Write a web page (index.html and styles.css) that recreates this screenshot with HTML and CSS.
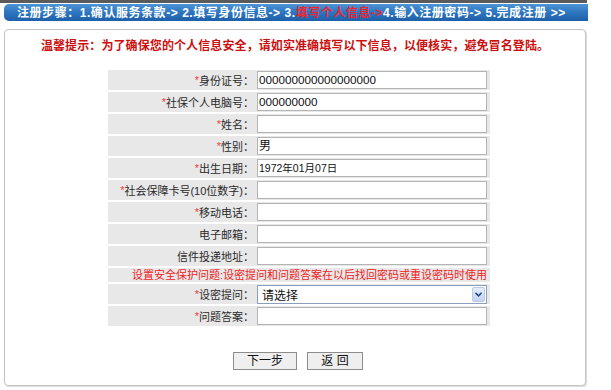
FILE: index.html
```html
<!DOCTYPE html>
<html lang="zh-CN">
<head>
<meta charset="utf-8">
<title>注册步骤</title>
<link rel="stylesheet" href="styles.css">
</head>
<body>
<div class="page">
  <div class="topline"></div>
  <div class="steps">注册步骤：1.确认服务条款-&gt; 2.填写身份信息-&gt; 3.<span class="cur">填写个人信息-&gt;</span>4.输入注册密码-&gt; 5.完成注册 &gt;&gt;</div>
  <div class="box">
    <p class="tip">温馨提示：为了确保您的个人信息安全，请如实准确填写以下信息，以便核实，避免冒名登陆。</p>
    <div class="form">
      <div class="row"><label class="lbl"><i>*</i>身份证号：</label><div class="field"><span class="input">000000000000000000</span></div></div>
      <div class="row"><label class="lbl"><i>*</i>社保个人电脑号：</label><div class="field"><span class="input">000000000</span></div></div>
      <div class="row"><label class="lbl"><i>*</i>姓名：</label><div class="field"><span class="input"></span></div></div>
      <div class="row"><label class="lbl"><i>*</i>性别：</label><div class="field"><span class="input cjk">男</span></div></div>
      <div class="row"><label class="lbl"><i>*</i>出生日期：</label><div class="field"><span class="input small">1972年01月07日</span></div></div>
      <div class="row"><label class="lbl"><i>*</i>社会保障卡号(10位数字)：</label><div class="field"><span class="input"></span></div></div>
      <div class="row"><label class="lbl"><i>*</i>移动电话：</label><div class="field"><span class="input"></span></div></div>
      <div class="row"><label class="lbl">电子邮箱：</label><div class="field"><span class="input"></span></div></div>
      <div class="row"><label class="lbl">信件投递地址：</label><div class="field"><span class="input"></span></div></div>
      <div class="row note">设置安全保护问题:设密提问和问题答案在以后找回密码或重设密码时使用</div>
      <div class="row"><label class="lbl"><i>*</i>设密提问：</label><div class="field"><div class="select"><span class="sel-text">请选择</span><span class="sel-btn"><svg width="7" height="5" viewBox="0 0 7 5"><path d="M0.5 0.8 L3.5 3.8 L6.5 0.8" fill="none" stroke="#2b4b8c" stroke-width="1.6"/></svg></span></div></div></div>
      <div class="row"><label class="lbl"><i>*</i>问题答案：</label><div class="field"><span class="input"></span></div></div>
    </div>
    <div class="buttons">
      <button class="btn next">下一步</button>
      <button class="btn back">返 回</button>
    </div>
  </div>
</div>
</body>
</html>
```
FILE: styles.css
```css
html, body {
  margin: 0;
  padding: 0;
  background: #ffffff;
}
body {
  font-family: "Liberation Sans", "Noto Sans CJK SC", sans-serif;
  font-size: 12px;
  color: #333;
}
.page {
  width: 611px;
  height: 390px;
  overflow: hidden;
}
.topline {
  width: 587px;
  height: 3px;
  background: #5a5a5a;
}
.steps {
  margin: 1px 0 0 4px;
  width: 571px;
  height: 17px;
  padding-left: 13px;
  line-height: 18px;
  border-radius: 5px 0 0 5px;
  background: linear-gradient(#4d94d6 0%, #2f78c2 45%, #1e5fa9 100%);
  color: #ffffff;
  font-weight: bold;
  font-size: 12px;
  letter-spacing: 0.55px;
  white-space: nowrap;
  overflow: hidden;
}
.steps .cur {
  color: #f0262e;
}
.box {
  margin: 8px 0 0 4px;
  width: 580px;
  height: 355px;
  border: 1px solid #c4c4c4;
  border-radius: 4px;
  box-shadow: 1px 1px 1px #dcdcdc;
  background: #fff;
  display: flex;
  flex-direction: column;
  align-items: flex-start;
}
.tip {
  margin: 9px 0 0 0;
  width: 100%;
  text-align: center;
  color: #cc1010;
  font-weight: bold;
  font-size: 12px;
  line-height: 14px;
  letter-spacing: 0.1px;
}
.form {
  margin: 17px 0 0 103px;
  width: 382px;
  display: flex;
  flex-direction: column;
  gap: 2px;
}
.row {
  height: 20px;
  display: flex;
  align-items: center;
  background: #e8e8e8;
}
.lbl {
  width: 147px;
  box-sizing: border-box;
  padding-right: 1px;
  text-align: right;
  font-size: 11px;
  color: #2a2a2a;
  white-space: nowrap;
}
.lbl i {
  font-style: normal;
  color: #f03a3a;
  font-size: 11px;
  position: relative;
  top: -1px;
}
.field {
  margin-left: 2px;
  display: flex;
  align-items: center;
}
.input {
  width: 230px;
  height: 18px;
  box-sizing: border-box;
  border: 1px solid #b4b4b4;
  background: #fff;
  padding-left: 1px;
  font-size: 11.7px;
  line-height: 16px;
  color: #111;
  white-space: nowrap;
}
.input.small {
  font-size: 10.5px;
}
.input.cjk {
  font-size: 12px;
}
.row.note {
  height: 14px;
  justify-content: flex-end;
  padding-right: 3px;
  color: #ee2222;
  font-size: 11px;
  line-height: 14px;
  white-space: nowrap;
}
.select {
  width: 230px;
  height: 19px;
  box-sizing: border-box;
  border: 1px solid #8aa0bd;
  background: #fff;
  display: flex;
  align-items: center;
  justify-content: space-between;
}
.sel-text {
  padding-left: 4px;
  font-size: 12px;
  color: #111;
}
.sel-btn {
  width: 13px;
  height: 15px;
  margin-right: 1px;
  box-sizing: border-box;
  border: 1px solid #b9c9e6;
  border-radius: 2px;
  background: linear-gradient(#e6eefc, #c3d3f3);
  display: flex;
  align-items: center;
  justify-content: center;
}
.buttons {
  margin: 26px 0 0 228px;
  display: flex;
  gap: 10px;
}
.btn {
  height: 18px;
  box-sizing: border-box;
  border: 1px solid #8c8c8c;
  background: #efefef;
  font-family: "Liberation Sans", "Noto Sans CJK SC", sans-serif;
  font-size: 12px;
  color: #111;
  padding: 0;
  line-height: 16px;
}
.btn.next { width: 64px; }
.btn.back { width: 56px; }
```
